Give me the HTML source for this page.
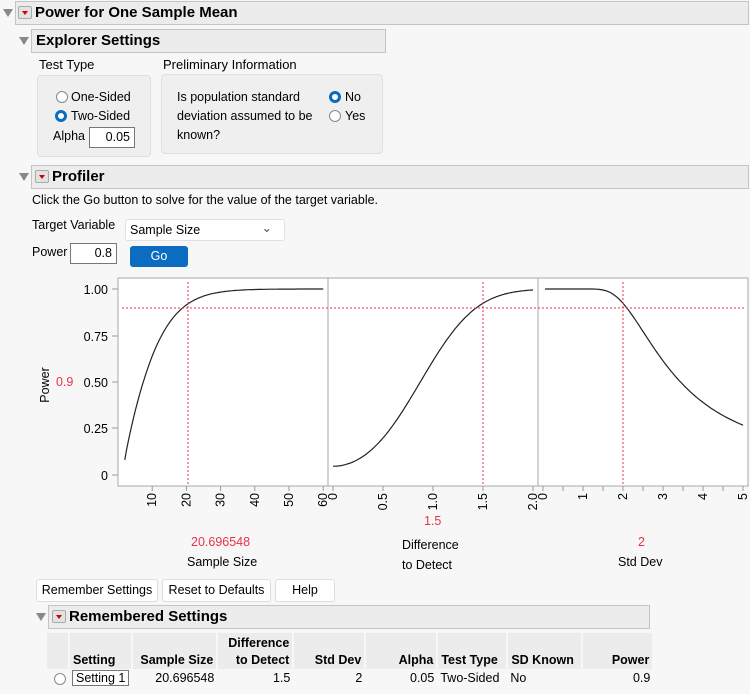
<!DOCTYPE html>
<html><head><meta charset="utf-8"><style>
*{margin:0;padding:0;box-sizing:border-box}
body{width:750px;height:694px;background:#f7f7f7;font-family:"Liberation Sans",sans-serif;font-size:12.5px;color:#000;position:relative;overflow:hidden}
.a{position:absolute;white-space:nowrap}
.hdr{position:absolute;background:#ececec;border:1px solid #c4c4c4;font-weight:bold;font-size:15px;padding-left:4px;line-height:20px}
.tri{position:absolute;width:0;height:0;border-left:5px solid transparent;border-right:5px solid transparent;border-top:8px solid #888}
.rb{position:absolute;width:14px;height:13px;background:#e2e2e2;border:1px solid #aaa;border-radius:2px}
.rb:after{content:"";position:absolute;left:3px;top:4px;border-left:3.5px solid transparent;border-right:3.5px solid transparent;border-top:4px solid #c00}
.box{position:absolute;background:#efefef;border:1px solid #e0e0e0;border-radius:4px}
.rad{position:absolute;width:12px;height:12px;border-radius:50%;border:1px solid #888;background:#fff}
.rad.on{border:3px solid #0b6cc2}
.inp{position:absolute;background:#fff;border:1px solid #777;text-align:right;padding-right:4px;line-height:19px}
.btn{position:absolute;background:#fff;border:1px solid #ddd;border-radius:3px;text-align:center;line-height:21px}
.red{color:#e8324a}
th{font-weight:bold;text-align:right;vertical-align:bottom;padding:0 3px;line-height:17px;background:#ececec;border-right:2px solid #f7f7f7}
td{text-align:right;padding:0 3px;line-height:19px}
</style></head><body>
<div class="tri" style="left:3px;top:9px"></div>
<div class="hdr" style="left:15px;top:1px;width:734px;height:24px;padding-left:19px;line-height:22px">Power for One Sample Mean</div>
<div class="rb" style="left:18px;top:6px"></div>
<div class="tri" style="left:19px;top:37px"></div>
<div class="hdr" style="left:31px;top:29px;width:355px;height:24px;line-height:22px">Explorer Settings</div>
<div class="a" style="left:39px;top:57px;font-size:13px">Test Type</div>
<div class="a" style="left:163px;top:57px;font-size:13px">Preliminary Information</div>
<div class="box" style="left:37px;top:75px;width:114px;height:82px"></div>
<div class="rad" style="left:56px;top:91px"></div><div class="a" style="left:71px;top:90px">One-Sided</div>
<div class="rad on" style="left:55px;top:110px"></div><div class="a" style="left:71px;top:109px">Two-Sided</div>
<div class="a" style="left:53px;top:129px">Alpha</div><div class="inp" style="left:89px;top:127px;width:46px;height:21px">0.05</div>
<div class="box" style="left:161px;top:74px;width:222px;height:80px"></div>
<div class="a" style="left:177px;top:88px;line-height:19px">Is population standard<br>deviation assumed to be<br>known?</div>
<div class="rad on" style="left:329px;top:91px"></div><div class="a" style="left:345px;top:90px">No</div>
<div class="rad" style="left:329px;top:110px"></div><div class="a" style="left:345px;top:109px">Yes</div>

<div class="tri" style="left:19px;top:173px"></div>
<div class="hdr" style="left:31px;top:165px;width:718px;height:24px;padding-left:20px;line-height:22px">Profiler</div>
<div class="rb" style="left:35px;top:170px"></div>
<div class="a" style="left:32px;top:193px">Click the Go button to solve for the value of the target variable.</div>
<div class="a" style="left:32px;top:218px">Target Variable</div>
<div class="a" style="left:125px;top:219px;width:160px;height:22px;background:#fff;border:1px solid #e0e0e0;border-radius:3px;padding:3px 4px">Sample Size<span style="position:absolute;right:12px;top:0px;color:#555">&#8964;</span></div>
<div class="a" style="left:32px;top:245px">Power</div><div class="inp" style="left:70px;top:243px;width:47px;height:21px">0.8</div>
<div class="a" style="left:130px;top:246px;width:58px;height:21px;background:#0b6cc2;border-radius:3px;color:#fff;text-align:center;line-height:21px">Go</div>

<svg class="a" style="left:0;top:270px" width="750" height="260" id="pl">
<rect x="118" y="8" width="630" height="208" fill="#fff" stroke="#aaa"/>
<line x1="328" y1="8" x2="328" y2="216" stroke="#aaa"/>
<line x1="538" y1="8" x2="538" y2="216" stroke="#aaa"/>
<g font-family="Liberation Sans" font-size="12.5" text-anchor="end">
<text x="108" y="24">1.00</text><text x="108" y="71">0.75</text><text x="108" y="117">0.50</text><text x="108" y="163">0.25</text><text x="108" y="210">0</text>
</g>
<g stroke="#999"><line x1="112" y1="19" x2="118" y2="19"/><line x1="112" y1="66" x2="118" y2="66"/><line x1="112" y1="112" x2="118" y2="112"/><line x1="112" y1="158" x2="118" y2="158"/><line x1="112" y1="205" x2="118" y2="205"/></g>
<text x="49" y="115" font-size="12.5" font-family="Liberation Sans" transform="rotate(-90 49 115)" text-anchor="middle">Power</text>
<text x="56" y="116" font-size="12.5" font-family="Liberation Sans" fill="#e8324a">0.9</text>
<g id="dyn"></g>
</svg>
<div class="a red" style="left:191px;top:535px">20.696548</div>
<div class="a" style="left:187px;top:555px">Sample Size</div>
<div class="a red" style="left:424px;top:514px">1.5</div>
<div class="a" style="left:402px;top:535px;line-height:20px">Difference<br>to Detect</div>
<div class="a red" style="left:638px;top:535px">2</div>
<div class="a" style="left:618px;top:555px">Std Dev</div>

<div class="btn" style="left:36px;top:579px;width:122px">Remember Settings</div>
<div class="btn" style="left:162px;top:579px;width:109px">Reset to Defaults</div>
<div class="btn" style="left:275px;top:579px;width:60px">Help</div>
<div class="tri" style="left:36px;top:613px"></div>
<div class="hdr" style="left:48px;top:605px;width:602px;height:24px;padding-left:20px;line-height:22px">Remembered Settings</div>
<div class="rb" style="left:52px;top:610px"></div>
<table class="a" style="left:47px;top:633px;border-collapse:collapse;font-size:12.5px">
<tr style="height:36px"><th style="width:22px"></th><th style="width:60px;text-align:left">Setting</th><th style="width:85px">Sample Size</th><th style="width:76px">Difference<br>to Detect</th><th style="width:72px">Std Dev</th><th style="width:72px">Alpha</th><th style="width:70px;text-align:left">Test Type</th><th style="width:75px;text-align:left">SD Known</th><th style="width:71px">Power</th></tr>
<tr><td><span style="display:inline-block;width:12px;height:12px;border:1px solid #888;border-radius:50%;background:#fff;vertical-align:middle"></span></td><td style="text-align:left"><span style="border:1px solid #777;background:#fff;padding:0 3px">Setting 1</span></td><td>20.696548</td><td>1.5</td><td>2</td><td>0.05</td><td style="text-align:left">Two-Sided</td><td style="text-align:left">No</td><td>0.9</td></tr>
</table>
<script>
function Phi(x){var t=1/(1+0.2316419*Math.abs(x)),d=0.3989423*Math.exp(-x*x/2),p=d*t*(0.3193815+t*(-0.3565638+t*(1.781478+t*(-1.821256+t*1.330274))));return x>0?1-p:p;}
function pw(n,d,s){var z=d*Math.sqrt(n)/s,c=1.96+0.5/(n-1);return Phi(z-c)+Phi(-z-c);}
function Y(p){return 205-p*186;}
var s='',P='';
for(var n=2;n<=60;n+=0.5)P+=(P?'L':'M')+(118+3.42*n).toFixed(1)+','+Y(pw(n,1.5,2)).toFixed(1);
s+='<path d="'+P+'" fill="none" stroke="#222" stroke-width="1.2"/>';
P='';for(var d=0;d<=2.001;d+=0.02)P+=(P?'L':'M')+(333+100*d).toFixed(1)+','+Y(pw(20.7,d,2)).toFixed(1);
s+='<path d="'+P+'" fill="none" stroke="#222" stroke-width="1.2"/>';
P='';for(var q=0.05;q<=5.001;q+=0.05)P+=(P?'L':'M')+(543+40*q).toFixed(1)+','+Y(pw(20.7,1.5,q)).toFixed(1);
s+='<path d="'+P+'" fill="none" stroke="#222" stroke-width="1.2"/>';
s+='<line x1="122" y1="38" x2="745" y2="38" stroke="#e8324a" stroke-dasharray="2,2"/>';
s+='<line x1="188" y1="12" x2="188" y2="216" stroke="#e8324a" stroke-dasharray="2,2"/>';
s+='<line x1="483" y1="12" x2="483" y2="216" stroke="#e8324a" stroke-dasharray="2,2"/>';
s+='<line x1="623" y1="12" x2="623" y2="216" stroke="#e8324a" stroke-dasharray="2,2"/>';
function tick(x,l){s+='<line x1="'+x+'" y1="216" x2="'+x+'" y2="221" stroke="#999"/>';if(l!=null)s+='<text font-family="Liberation Sans" font-size="12.5" text-anchor="end" transform="translate('+(x+4)+',223) rotate(-90)">'+l+'</text>';}
[10,20,30,40,50,60].forEach(function(v){tick(118+3.42*v,v);});
['0','0.5','1.0','1.5','2.0'].forEach(function(v,i){tick(333+50*i,v);});
for(var i=0;i<=5;i++){tick(543+40*i,i);if(i<5)tick(563+40*i,null);}
document.getElementById('dyn').innerHTML=s;
</script>
</body></html>
